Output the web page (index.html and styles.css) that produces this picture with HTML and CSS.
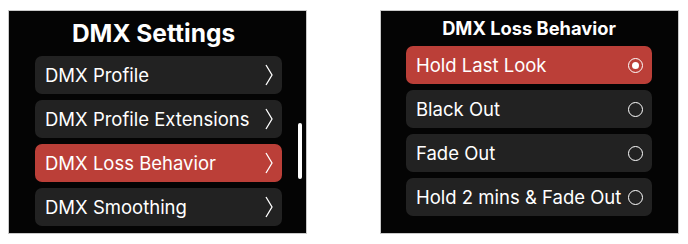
FILE: index.html
```html
<!DOCTYPE html>
<html>
<head>
<meta charset="utf-8">
<link rel="stylesheet" href="styles.css">
</head>
<body>
<div class="stage">
  <div class="panel settings">
    <div class="title big">DMX Settings</div>
    <div class="list">
      <div class="item"><span>DMX Profile</span><svg class="chev" viewBox="0 0 8 22"><polyline points="1,1 7,11 1,21"/></svg></div>
      <div class="item"><span>DMX Profile Extensions</span><svg class="chev" viewBox="0 0 8 22"><polyline points="1,1 7,11 1,21"/></svg></div>
      <div class="item active"><span>DMX Loss Behavior</span><svg class="chev" viewBox="0 0 8 22"><polyline points="1,1 7,11 1,21"/></svg></div>
      <div class="item"><span>DMX Smoothing</span><svg class="chev" viewBox="0 0 8 22"><polyline points="1,1 7,11 1,21"/></svg></div>
    </div>
    <div class="scrollbar"></div>
  </div>
  <div class="panel options">
    <div class="title small">DMX Loss Behavior</div>
    <div class="list">
      <div class="item active"><span>Hold Last Look</span><span class="radio on"></span></div>
      <div class="item"><span>Black Out</span><span class="radio"></span></div>
      <div class="item"><span>Fade Out</span><span class="radio"></span></div>
      <div class="item"><span>Hold 2 mins &amp; Fade Out</span><span class="radio"></span></div>
    </div>
  </div>
</div>
</body>
</html>
```
FILE: styles.css
```css
html, body {
  margin: 0;
  padding: 0;
  background: #ffffff;
}
body {
  font-family: Inter, "Noto Sans", sans-serif;
  color: #ffffff;
}
.stage {
  display: flex;
  gap: 73px;
  padding: 10px 0 0 8px;
}
.panel {
  box-sizing: border-box;
  width: 299px;
  height: 224px;
  background: #040404;
  border: 1px solid #c9c9c9;
}
.settings {
  display: grid;
  grid-template-columns: 247px 4px;
  column-gap: 16px;
  grid-template-rows: 45px auto;
  padding-left: 26px;
}
.options {
  display: flex;
  flex-direction: column;
  padding-left: 25px;
}
.title {
  font-weight: 700;
  text-align: center;
}
.big {
  font-size: 24.5px;
  line-height: 45px;
  grid-column: 1;
  padding-right: 10px;
}
.small {
  font-size: 18.3px;
  line-height: 35px;
  width: 246px;
}
.list {
  display: flex;
  flex-direction: column;
  gap: 6px;
}
.settings .list {
  grid-column: 1;
  grid-row: 2;
}
.options .list {
  width: 246px;
}
.item {
  height: 38px;
  box-sizing: border-box;
  border-radius: 7px;
  background: #222222;
  display: flex;
  align-items: center;
  justify-content: space-between;
  padding: 0 9px 0 10px;
  font-size: 18.5px;
}
.item.active {
  background: #bb3f38;
}
.chev {
  width: 8px;
  height: 22px;
}
.chev polyline {
  fill: none;
  stroke: #ffffff;
  stroke-width: 1.3;
}
.scrollbar {
  grid-column: 2;
  grid-row: 2;
  margin-top: 67px;
  width: 4px;
  height: 56px;
  border-radius: 2px;
  background: #ffffff;
}
.radio {
  box-sizing: border-box;
  width: 15px;
  height: 15px;
  border: 1.6px solid #ffffff;
  border-radius: 50%;
  display: flex;
  align-items: center;
  justify-content: center;
  flex: none;
}
.radio.on::after {
  content: "";
  width: 7px;
  height: 7px;
  border-radius: 50%;
  background: #ffffff;
}
.options .item {
  padding-right: 9px;
}
```
